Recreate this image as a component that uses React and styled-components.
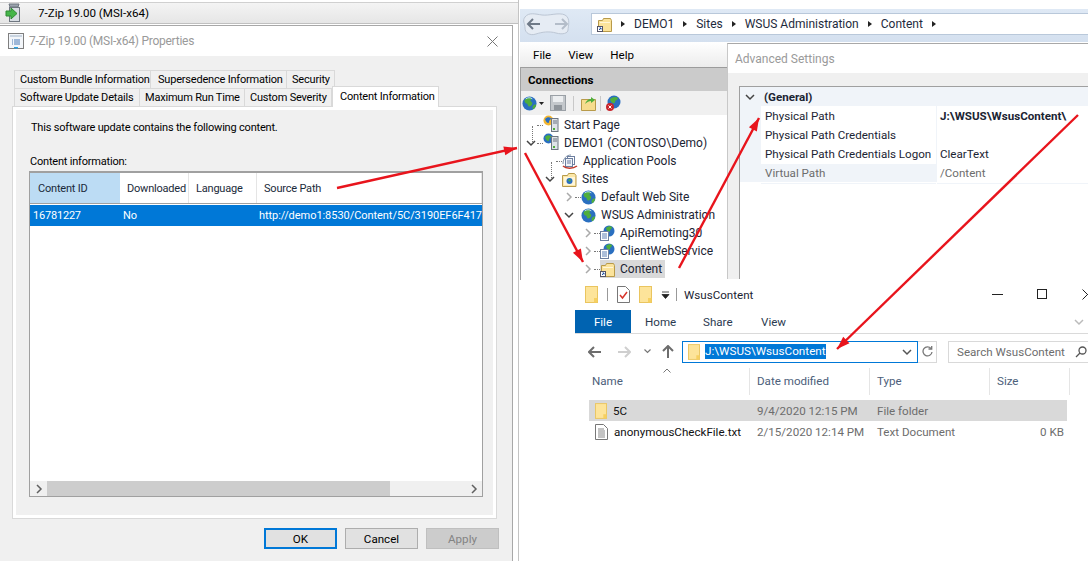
import React from 'react'
import styled, { createGlobalStyle } from 'styled-components'

const UI_FONT = `Roboto, "Noto Sans", sans-serif`

const Global = createGlobalStyle`
  html, body {
    margin: 0;
    padding: 0;
    background: #fff;
    overflow: hidden;
  }
  * { box-sizing: border-box; }
`

const Desktop = styled.div`
  position: relative;
  width: 1088px;
  height: 561px;
  overflow: hidden;
  background: #fff;
  font-family: ${UI_FONT};
  font-size: 11.6px;
  color: #000;
  white-space: nowrap;
`

/* left window */

const PropertiesWindow = styled.section`
  position: absolute;
  left: 0;
  top: 0;
  width: 519px;
  height: 561px;
  font-size: 11px;
  letter-spacing: -0.2px;
  border-right: 1px solid #c4c4c4;
`

const ListStrip = styled.div`
  display: flex;
  align-items: center;
  height: 22px;
  margin-top: 2px;
  padding-left: 5px;
  gap: 15px;
  font-size: 11.6px;
  letter-spacing: 0;
  background: linear-gradient(#f4f4f4, #e6e6e6);
  border-top: 1px solid #d0d0d0;
  border-bottom: 1px solid #c0c0c0;
`

const Dialog = styled.div`
  width: 513px;
  height: 536px;
  margin-top: 1px;
  background: #f0f0f0;
  border-top: 1px solid #a8a8a8;
  border-right: 1px solid #a8a8a8;
`

const DialogTitle = styled.header`
  display: flex;
  align-items: center;
  height: 30px;
  padding: 0 14px 0 8px;
  gap: 5px;
  background: #fff;
  color: #9a9a9a;
  font-size: 12px;
  letter-spacing: -0.25px;
  svg:last-child { margin-left: auto; }
`

const TabRow = styled.div`
  display: flex;
  height: 18px;
  margin-left: 14px;
  margin-top: ${p => p.$top || 0}px;
  position: relative;
`

const Tab = styled.div`
  width: ${p => p.$w}px;
  height: ${p => (p.$active ? 21 : 18)}px;
  margin-top: ${p => (p.$active ? -2 : 0)}px;
  padding-left: ${p => p.$pad || 5}px;
  line-height: ${p => (p.$active ? 19 : 18)}px;
  background: ${p => (p.$active ? '#fff' : '#f0f0f0')};
  border: 1px solid #d9d9d9;
  border-bottom: none;
  border-left-width: ${p => (p.$first || p.$active ? 1 : 0)}px;
  position: relative;
  z-index: ${p => (p.$active ? 2 : 0)};
`

const TabPanel = styled.div`
  width: 485px;
  height: 413px;
  margin-left: 12px;
  padding: 0 0 0 16px;
  background: #f0f0f0;
  border: 1px solid #d9d9d9;
  box-shadow: inset 0 0 0 3px #fff;
`

const Intro = styled.p`
  margin: 0;
  padding: 13px 0 0 2px;
  line-height: 15px;
`

const ListLabel = styled.p`
  margin: 0;
  padding: 19px 0 0 1px;
  line-height: 15px;
`

const ContentList = styled.div`
  display: flex;
  flex-direction: column;
  width: 454px;
  height: 326px;
  margin-top: 2px;
  background: #fff;
  border: 1px solid #a0a0a0;
  border-top-width: 2px;
`

const ListHead = styled.div`
  display: flex;
  height: 31px;
  border-bottom: 1px solid #a0a0a0;
  margin-bottom: 1px;
`

const HeadCell = styled.div`
  width: ${p => p.$w}px;
  padding-left: ${p => p.$pad}px;
  line-height: 32px;
  background: ${p => (p.$hot ? '#bcdcf4' : '#fff')};
  border-right: 1px solid ${p => (p.$hot ? '#bcdcf4' : '#e5e5e5')};
  color: #1a2a3a;
`

const ListRow = styled.div`
  display: flex;
  height: 21px;
  line-height: 22px;
  background: #0078d7;
  color: #fff;
`

const RowCell = styled.div`
  width: ${p => p.$w}px;
  padding-left: ${p => p.$pad}px;
  flex-shrink: 0;
`

const UrlCell = styled(RowCell)`
  overflow: hidden;
  letter-spacing: -0.05px;
`

const ListFill = styled.div`
  flex: 1;
`

const HScroll = styled.div`
  display: flex;
  align-items: center;
  height: 15px;
  background: #f0f0f0;
`

const ScrollBtn = styled.div`
  display: flex;
  align-items: center;
  justify-content: center;
  width: 17px;
  height: 15px;
  flex-shrink: 0;
`

const ScrollTrack = styled.div`
  flex: 1;
  height: 15px;
`

const ScrollThumb = styled.div`
  width: 343px;
  height: 15px;
  background: #cdcdcd;
`

const DialogButtons = styled.div`
  display: flex;
  justify-content: flex-end;
  gap: 8px;
  width: 499px;
  margin-top: 9px;
`

const DlgButton = styled.button`
  width: 73px;
  height: 21px;
  padding: 0;
  font: 11.6px ${UI_FONT};
  color: ${p => (p.disabled ? '#838383' : '#000')};
  background: ${p => (p.disabled ? '#cccccc' : '#e1e1e1')};
  border: ${p => (p.$primary ? '2px solid #0078d7' : `1px solid ${p.disabled ? '#bfbfbf' : '#adadad'}`)};
`

/* IIS manager */

const IisWindow = styled.section`
  position: absolute;
  left: 520px;
  top: 0;
  width: 568px;
  height: 280px;
  padding-top: 9px;
`

const AddressStrip = styled.div`
  display: flex;
  align-items: center;
  height: 33px;
  padding: 0 0 3px 2px;
  background: linear-gradient(#dfe9f5, #d4e0ef);
  gap: 19px;
`

const Breadcrumb = styled.div`
  display: flex;
  align-items: center;
  flex: 1;
  height: 22px;
  padding-left: 5px;
  gap: 9px;
  background: #fff;
  border: 1px solid #b9c8da;
  border-right: none;
  font-size: 12px;
  color: #1e2a3c;
`

const CrumbArrow = styled.span`
  width: 0;
  height: 0;
  border-left: 4px solid #222;
  border-top: 3.5px solid transparent;
  border-bottom: 3.5px solid transparent;
`

const MenuBar = styled.nav`
  display: flex;
  align-items: center;
  height: 25px;
  width: 207px;
  padding-left: 13px;
  gap: 17px;
  font-size: 11.6px;
  background: linear-gradient(#fff, #ececec);
`

const ConnectionsPane = styled.div`
  width: 207px;
  height: 213px;
  border-left: 1px solid #a0a0a0;
`

const PaneHeader = styled.div`
  height: 24px;
  line-height: 24px;
  padding-left: 7px;
  font-weight: 700;
  background: #cbcbcb;
  border-top: 1px solid #9c9c9c;
`

const PaneTools = styled.div`
  display: flex;
  align-items: center;
  height: 24px;
  padding-left: 1px;
  gap: 4px;
  background: #f0f0f0;
`

const ToolSep = styled.span`
  width: 1px;
  height: 15px;
  margin: 0 ${p => p.$right || 0}px 0 ${p => p.$left || 0}px;
  background: #c8c8c8;
`

const TreeList = styled.ul`
  list-style: none;
  margin: 0;
  padding: 1px 0 0;
`

const TreeRow = styled.li`
  position: relative;
  display: flex;
  align-items: center;
  height: 18px;
  padding-left: ${p => 4 + p.$depth * 19}px;

  &::before {
    content: ${p => (p.$line ? '""' : 'none')};
    position: absolute;
    left: ${p => 11 + p.$depth * 19}px;
    top: 10px;
    height: ${p => p.$line}px;
    border-left: 1px dotted #777;
  }
`

const Twisty = styled.span`
  display: flex;
  align-items: center;
  justify-content: center;
  width: 12px;
  flex-shrink: 0;
`

const Dots = styled.span`
  width: 6px;
  border-top: 1px dotted ${p => (p.$show ? '#777' : 'transparent')};
  flex-shrink: 0;
`

const TreeNode = styled.span`
  display: flex;
  align-items: center;
  height: 18px;
  gap: 5px;
  padding-right: 3px;
  font-size: 12px;
  color: #1b2433;
  background: ${p => (p.$selected ? '#d9d9d9' : 'transparent')};
`

const AdvancedWindow = styled.section`
  position: absolute;
  left: 727px;
  top: 43px;
  width: 361px;
  height: 236px;
  background: #f0f0f0;
  border-top: 1px solid #a8a8a8;
  border-left: 1px solid #c8c8c8;
`

const AdvancedTitle = styled.header`
  height: 29px;
  line-height: 31px;
  padding-left: 7px;
  background: #fff;
  color: #9a9a9a;
  font-size: 12px;
`

const PropGrid = styled.div`
  height: 193px;
  margin: 13px 0 0 11px;
  background: #fff;
  border: 1px solid #a0a0a0;
  border-right: none;
  border-bottom: none;
`

const PropCategory = styled.div`
  display: flex;
  align-items: center;
  height: 19px;
  padding-left: 5px;
  gap: 9px;
  background: #f0f4f9;
  font-weight: 700;
  color: #1b2433;
`

const PropRow = styled.div`
  display: grid;
  grid-template-columns: 196px 1fr;
  height: 19px;
  line-height: 20px;
  background: #f0f4f9;
  color: ${p => (p.$muted ? '#6d6d6d' : '#1b2433')};
`

const PropName = styled.div`
  margin-left: 21px;
  padding-left: 4px;
  background: ${p => (p.$muted ? 'transparent' : '#fff')};
  border-bottom: 1px solid #f0f4f9;
`

const PropValue = styled.div`
  padding-left: 3px;
  margin-left: 1px;
  font-weight: ${p => (p.$bold ? 700 : 400)};
  background: #fff;
  border-bottom: 1px solid #f0f4f9;
`

/* explorer */

const ExplorerWindow = styled.section`
  position: absolute;
  left: 575px;
  top: 279px;
  width: 513px;
  height: 282px;
  background: #fff;
`

const ExpTitleBar = styled.div`
  display: flex;
  align-items: center;
  height: 31px;
  padding-left: 10px;
  gap: 9px;
  color: #1b2433;
`

const VSep = styled.span`
  width: 1px;
  height: 13px;
  margin-left: ${p => p.$pull || 0}px;
  background: #999;
`

const WindowTitle = styled.span`
  margin-left: -2px;
`

const WindowControls = styled.div`
  display: flex;
  align-items: center;
  margin-left: auto;
  gap: 34px;
  margin-right: -5px;
`

const RibbonTabs = styled.div`
  display: flex;
  align-items: stretch;
  height: 24px;
  border-bottom: 1px solid #dadada;
  color: #2b3a50;
`

const FileTab = styled.div`
  width: 56px;
  line-height: 24px;
  text-align: center;
  background: #0063b1;
  color: #fff;
`

const RibbonTab = styled.div`
  line-height: 24px;
  width: ${p => p.$w}px;
  margin-left: ${p => p.$gap}px;
`

const RibbonToggle = styled.div`
  margin-left: auto;
  margin-right: 4px;
  display: flex;
  align-items: center;
`

const NavRow = styled.div`
  display: flex;
  align-items: center;
  height: 23px;
  margin-top: 6px;
  padding-left: 12px;
`

const NavBtn = styled.span`
  display: flex;
  align-items: center;
  justify-content: center;
  width: 14px;
  margin-left: ${p => p.$gap || 0}px;
`

const PathBox = styled.div`
  display: flex;
  align-items: center;
  width: 236px;
  height: 22px;
  margin-left: 7px;
  padding: 0 5px;
  border: 1px solid #0078d7;
  font-size: 11.7px;
  gap: 5px;
`

const PathSelected = styled.span`
  background: #0078d7;
  color: #fff;
  line-height: 15px;
`

const PathCaret = styled.span`
  display: flex;
  margin-left: auto;
`

const RefreshBox = styled.div`
  display: flex;
  align-items: center;
  justify-content: center;
  width: 19px;
  height: 22px;
  border: 1px solid #d9d9d9;
  border-left: none;
`

const SearchBox = styled.div`
  display: flex;
  align-items: center;
  justify-content: space-between;
  flex: 1;
  height: 22px;
  margin-left: 11px;
  padding: 0 1px 0 8px;
  border: 1px solid #d9d9d9;
  border-right: none;
  color: #6d6d6d;
`

const ColumnHead = styled.div`
  position: relative;
  display: flex;
  height: 27px;
  margin: 5px 0 0 14px;
`

const SortCaret = styled.span`
  position: absolute;
  left: 74px;
  top: 0;
  line-height: 0;
`

const ColCell = styled.div`
  width: ${p => p.$w}px;
  padding-left: ${p => p.$pad}px;
  line-height: 27px;
  color: #4c607a;
  border-right: 1px solid #e5e5e5;
`

const FileList = styled.div`
  margin: 5px 0 0 14px;
  width: 478px;
`

const FileRow = styled.div`
  display: grid;
  grid-template-columns: 161px 120px 120px 74px;
  align-items: center;
  height: 21px;
  background: ${p => (p.$selected ? '#d9d9d9' : 'transparent')};
`

const FileName = styled.div`
  display: flex;
  align-items: center;
  gap: 6px;
  padding-left: 6px;
  color: #111;
`

const FileMeta = styled.div`
  padding-left: 7px;
  color: #6d6d6d;
  text-align: ${p => (p.$right ? 'right' : 'left')};
`

const ArrowLayer = styled.svg`
  position: absolute;
  left: 0;
  top: 0;
  pointer-events: none;
`

const ToolGlobeWrap = styled.span`
  display: flex;
  align-items: center;
  gap: 2px;
  margin-right: 2px;
`

/* drawings */

const Folder = ({ w = 13, h = 17 }) => (
  <svg width={w} height={h} viewBox="0 0 13 17" style={{ flexShrink: 0 }}>
    <rect x=".5" y=".5" width="12" height="16" fill="#fde49a" stroke="#eac55f" />
    <rect x="9" y="12" width="3.5" height="4.5" fill="#f6d061" />
  </svg>
)

const Globe = ({ s = 15 }) => (
  <svg width={s} height={s} viewBox="0 0 16 16" style={{ flexShrink: 0 }}>
    <circle cx="8" cy="8" r="7.5" fill="#2a6fc0" />
    <path d="M3 4c2-2 5-3 7-2 1 1-1 2-1 3s2 1 2 3-3 4-4 3-1-3-2-3-3-2-2-4zM12 10c1-1 2-1 3-1 0 2-1 4-3 5-1-1-1-3 0-4z" fill="#4fae3c" />
    <path d="M4 3c2-1.500 5-1.500 7 0" stroke="#bfe0ff" fill="none" />
  </svg>
)

const ServerNode = ({ start }) => (
  <svg width="16" height="17" viewBox="0 0 16 17" style={{ flexShrink: 0, marginTop: -3 }}>
    <circle cx="5.500" cy="5.500" r="5" fill={start ? '#f2b632' : '#2a6fc0'} />
    <path d="M2 4c2-2 4-2 6-1 0 2-2 2-2 4s-3 1-4-3z" fill={start ? '#2a6fc0' : '#4fae3c'} />
    <rect x="8.500" y="3.500" width="6.500" height="13" fill="#dfe3e8" stroke="#6d7580" />
    <path d="M10 6h4M10 8h4" stroke="#6d7580" />
    <rect x="10" y="13" width="2" height="2" fill="#4fae3c" />
  </svg>
)

const PoolIcon = () => (
  <svg width="16" height="17" viewBox="0 0 16 17" style={{ flexShrink: 0 }}>
    <path d="M1 11c0-6 4-9 8-9" stroke="#7c8ea6" fill="none" />
    <rect x="5.500" y="3.500" width="7" height="8" fill="#fff" stroke="#6d7fa0" />
    <rect x="3.500" y="5.500" width="7" height="8" fill="#eef2f8" stroke="#6d7fa0" />
    <path d="M5 8h4M5 10h4" stroke="#6d7fa0" />
    <path d="M1 13c3 3 10 3 14 0" stroke="#c0392b" strokeWidth="1.500" fill="none" />
  </svg>
)

const SitesIcon = () => (
  <svg width="15" height="15" viewBox="0 0 15 15" style={{ flexShrink: 0 }}>
    <path d="M.5 14.500v-11h5l1-2h6l1.500 2v11z" fill="#fbe7a8" stroke="#b89a4a" />
    <rect x="2" y="5" width="11" height="8" fill="#fff6d8" />
    <circle cx="7.500" cy="9" r="3" fill="#2a6fc0" />
    <path d="M6 8c1-1 2-1 3 0-1 2-2 2-3 0z" fill="#4fae3c" />
  </svg>
)

const WebApp = () => (
  <svg width="15" height="16" viewBox="0 0 15 16" style={{ flexShrink: 0 }}>
    <circle cx="9" cy="6" r="5.500" fill="#2a6fc0" />
    <path d="M6 3c2-2 5-2 6-1 0 2-2 2-2 4s-3 1-4-3z" fill="#4fae3c" />
    <rect x=".5" y="6.500" width="8" height="9" fill="#fff" stroke="#6d7fa0" />
    <path d="M2 9h5M2 11h5M2 13h5" stroke="#5b7fb5" />
  </svg>
)

const ShortcutFolder = ({ s = 15 }) => (
  <svg width={s} height={s} viewBox="0 0 15 15" style={{ flexShrink: 0 }}>
    <path d="M1.500 14.500v-11h4l1-2h7l1 2v11z" fill="#fbe39b" stroke="#b89a4a" />
    <path d="M3 5h10v1H3z" fill="#fff6d8" />
    <rect x=".5" y="9.500" width="5" height="5" fill="#fff" stroke="#556" />
    <path d="M2 13l2-2M2.500 11H4v1.500" stroke="#1b4fa0" fill="none" />
  </svg>
)

const Chevron = ({ down, color = '#555' }) => (
  <svg width="10" height="10" viewBox="0 0 10 10" fill="none" stroke={color} strokeWidth="1.500">
    {down ? <path d="M1 3l4 4 4-4" /> : <path d="M3 1l4 4-4 4" />}
  </svg>
)

const NavPill = () => (
  <svg width="50" height="26" viewBox="0 0 50 26">
    <path d="M3 6c4-5 10-3 17-2s17-3 23 0 3 12 3 15-5 5-12 3-14-1-20 1-11-1-11-6-3-7 0-11z" fill="#e6ecf4" stroke="#bcc6d4" />
    <path d="M18 13H6m5-5l-5 5 5 5" stroke="#6f7a88" strokeWidth="2" fill="none" />
    <path d="M33 13h12m-5-5l5 5-5 5" stroke="#b4bdc9" strokeWidth="2" fill="none" />
  </svg>
)

const DialogIcon = () => (
  <svg width="16" height="16" viewBox="0 0 16 16">
    <rect x=".5" y=".5" width="15" height="15" fill="#f3f6fa" stroke="#7f7f7f" />
    <rect x="2" y="2" width="12" height="2" fill="#c9d4e0" />
    <path d="M4 7h1M6 7h6M4 9h1M6 9h6M4 11h1M6 11h6" stroke="#4a78b5" />
    <rect x="6" y="14" width="4" height="1.500" fill="#2a9fe0" />
  </svg>
)

const PackageIcon = () => (
  <svg width="18" height="20" viewBox="0 0 18 20">
    <path d="M4 1h10l-1 3H5z" fill="#9aa3ad" stroke="#6f7780" />
    <rect x="4.500" y="4.500" width="10" height="14" fill="#d8dde3" stroke="#6f7780" />
    <path d="M1 8h5V5l6 5.500L6 16v-3H1z" fill="#46b64a" stroke="#2f8a33" />
  </svg>
)

const Cross = ({ s = 11, color = '#777' }) => (
  <svg width={s} height={s} viewBox="0 0 11 11" stroke={color} fill="none">
    <path d="M.5.500l10 10M10.500.500l-10 10" />
  </svg>
)

const ToolGlobe = () => (
  <ToolGlobeWrap>
    <Globe s={15} />
    <svg width="5" height="3" viewBox="0 0 5 3"><path d="M0 0h5L2.500 3z" fill="#222" /></svg>
  </ToolGlobeWrap>
)

const SaveIcon = () => (
  <svg width="16" height="16" viewBox="0 0 16 16">
    <rect x=".5" y=".5" width="15" height="15" fill="#c4c8cc" stroke="#9aa0a6" />
    <rect x="3" y="1" width="10" height="6" fill="#eceef0" />
    <rect x="4" y="10" width="8" height="5" fill="#8f959b" />
  </svg>
)

const UpFolder = () => (
  <svg width="15" height="16" viewBox="0 0 15 16">
    <path d="M.5 15.500v-11h14v11z" fill="#f6dc8e" stroke="#b89a4a" />
    <path d="M4 9c1-3 3-5 6-5V2l4 3-4 3V6c-2 0-4 1-6 3z" fill="#4fae3c" />
  </svg>
)

const DisconnectIcon = () => (
  <svg width="17" height="17" viewBox="0 0 17 17">
    <circle cx="9" cy="7" r="6.500" fill="#2a6fc0" />
    <path d="M5 4c2-2 6-3 8-1 0 2-3 2-3 4s-4 2-5-3z" fill="#4fae3c" />
    <circle cx="5" cy="12" r="4" fill="#c9252c" />
    <path d="M3.500 10.500l3 3m0-3l-3 3" stroke="#fff" />
  </svg>
)

const TextFile = () => (
  <svg width="13" height="16" viewBox="0 0 13 16" style={{ flexShrink: 0 }}>
    <path d="M.5.500h8l4 4v11H.5z" fill="#fff" stroke="#777" />
    <path d="M3 5h6M3 7h7M3 9h7M3 11h7M3 13h7" stroke="#888" />
  </svg>
)

const Checklist = () => (
  <svg width="13" height="17" viewBox="0 0 13 17">
    <path d="M.5.500h8l4 4v12H.5z" fill="#fff" stroke="#777" />
    <path d="M3 9l2.500 3L10 6" stroke="#d7352b" strokeWidth="1.500" fill="none" />
  </svg>
)

const HistoryArrow = ({ left, color }) => (
  <svg width="13" height="12" viewBox="0 0 13 12" stroke={color} strokeWidth="2" fill="none">
    {left ? <path d="M13 6H2m4-5L1 6l5 5" /> : <path d="M0 6h11M7 1l5 5-5 5" />}
  </svg>
)

const UpArrow = () => (
  <svg width="12" height="13" viewBox="0 0 12 13" stroke="#6d6d6d" strokeWidth="2" fill="none">
    <path d="M6 13V2M1 6l5-5 5 5" />
  </svg>
)

const RefreshIcon = () => (
  <svg width="11" height="12" viewBox="0 0 11 12" stroke="#777" strokeWidth="1.300" fill="none">
    <path d="M9 2.500A4.500 4.500 0 1 0 10 6" />
    <path d="M6.500 3h3.200V0" />
  </svg>
)

const SearchIcon = () => (
  <svg width="12" height="12" viewBox="0 0 12 12" stroke="#555" strokeWidth="1.300" fill="none">
    <circle cx="7.500" cy="4.500" r="3.500" />
    <path d="M5 7l-4 4" />
  </svg>
)

const arrows = [
  { x1: 337, y1: 188, x2: 517, y2: 148 },
  { x1: 525, y1: 153, x2: 583, y2: 262 },
  { x1: 679, y1: 268, x2: 759, y2: 118 },
  { x1: 1078, y1: 115, x2: 837, y2: 349 },
]

const arrowPoints = ({ x1, y1, x2, y2 }) => {
  const len = Math.hypot(x2 - x1, y2 - y1)
  const ux = (x2 - x1) / len
  const uy = (y2 - y1) / len
  const bx = x2 - ux * 13
  const by = y2 - uy * 13
  return `${x2},${y2} ${bx - uy * 4.5},${by + ux * 4.5} ${bx + uy * 4.5},${by - ux * 4.5}`
}

const treeItems = [
  { depth: 0, label: 'Start Page', icon: <ServerNode start />, dots: true, line: 18 },
  { depth: 0, label: 'DEMO1 (CONTOSO\\Demo)', icon: <ServerNode />, open: true, dots: true },
  { depth: 1, label: 'Application Pools', icon: <PoolIcon />, dots: true, line: 18 },
  { depth: 1, label: 'Sites', icon: <SitesIcon />, open: true },
  { depth: 2, label: 'Default Web Site', icon: <Globe />, closed: true, dots: true },
  { depth: 2, label: 'WSUS Administration', icon: <Globe />, open: true },
  { depth: 3, label: 'ApiRemoting30', icon: <WebApp />, closed: true, dots: true },
  { depth: 3, label: 'ClientWebService', icon: <WebApp />, closed: true, dots: true },
  { depth: 3, label: 'Content', icon: <ShortcutFolder />, closed: true, dots: true, selected: true },
]

const App = () => (
  <Desktop>
    <Global />

    <PropertiesWindow>
      <ListStrip>
        <PackageIcon />
        <span>7-Zip 19.00 (MSI-x64)</span>
      </ListStrip>
      <Dialog>
        <DialogTitle>
          <DialogIcon />
          <span>7-Zip 19.00 (MSI-x64) Properties</span>
          <Cross />
        </DialogTitle>
        <TabRow $top={14}>
          <Tab $w={137} $first>Custom Bundle Information</Tab>
          <Tab $w={136} $pad={7}>Supersedence Information</Tab>
          <Tab $w={48}>Security</Tab>
        </TabRow>
        <TabRow>
          <Tab $w={126} $first>Software Update Details</Tab>
          <Tab $w={105}>Maximum Run Time</Tab>
          <Tab $w={87}>Custom Severity</Tab>
          <Tab $w={107} $pad={7} $active>Content Information</Tab>
        </TabRow>
        <TabPanel>
          <Intro>This software update contains the following content.</Intro>
          <ListLabel>Content information:</ListLabel>
          <ContentList>
            <ListHead>
              <HeadCell $w={90} $pad={8} $hot>Content ID</HeadCell>
              <HeadCell $w={69} $pad={7}>Downloaded</HeadCell>
              <HeadCell $w={68} $pad={7}>Language</HeadCell>
              <HeadCell $w={225} $pad={7}>Source Path</HeadCell>
            </ListHead>
            <ListRow>
              <RowCell $w={90} $pad={3}>16781227</RowCell>
              <RowCell $w={137} $pad={3}>No</RowCell>
              <UrlCell $w={225} $pad={2}>http://demo1:8530/Content/5C/3190EF6F417</UrlCell>
            </ListRow>
            <ListFill />
            <HScroll>
              <ScrollBtn><Chevron color="#606060" /></ScrollBtn>
              <ScrollTrack><ScrollThumb /></ScrollTrack>
              <ScrollBtn><Chevron color="#606060" /></ScrollBtn>
            </HScroll>
          </ContentList>
        </TabPanel>
        <DialogButtons>
          <DlgButton $primary>OK</DlgButton>
          <DlgButton>Cancel</DlgButton>
          <DlgButton disabled>Apply</DlgButton>
        </DialogButtons>
      </Dialog>
    </PropertiesWindow>

    <IisWindow>
      <AddressStrip>
        <NavPill />
        <Breadcrumb>
          <ShortcutFolder s={15} />
          <CrumbArrow />
          <span>DEMO1</span>
          <CrumbArrow />
          <span>Sites</span>
          <CrumbArrow />
          <span>WSUS Administration</span>
          <CrumbArrow />
          <span>Content</span>
          <CrumbArrow />
        </Breadcrumb>
      </AddressStrip>
      <MenuBar>
        <span>File</span>
        <span>View</span>
        <span>Help</span>
      </MenuBar>
      <ConnectionsPane>
        <PaneHeader>Connections</PaneHeader>
        <PaneTools>
          <ToolGlobe />
          <SaveIcon />
          <ToolSep $left={3} $right={3} />
          <UpFolder />
          <ToolSep />
          <DisconnectIcon />
        </PaneTools>
        <TreeList>
          {treeItems.map(item => (
            <TreeRow key={item.label} $depth={item.depth} $line={item.line}>
              <Twisty>
                {item.open && <Chevron down color="#444" />}
                {item.closed && <Chevron color="#aaa" />}
              </Twisty>
              <Dots $show={item.dots} />
              <TreeNode $selected={item.selected}>
                {item.icon}
                <span>{item.label}</span>
              </TreeNode>
            </TreeRow>
          ))}
        </TreeList>
      </ConnectionsPane>
    </IisWindow>

    <AdvancedWindow>
      <AdvancedTitle>Advanced Settings</AdvancedTitle>
      <PropGrid>
        <PropCategory>
          <Chevron down color="#444" />
          <span>(General)</span>
        </PropCategory>
        <PropRow>
          <PropName>Physical Path</PropName>
          <PropValue $bold>J:\WSUS\WsusContent\</PropValue>
        </PropRow>
        <PropRow>
          <PropName>Physical Path Credentials</PropName>
          <PropValue />
        </PropRow>
        <PropRow>
          <PropName>Physical Path Credentials Logon</PropName>
          <PropValue>ClearText</PropValue>
        </PropRow>
        <PropRow $muted>
          <PropName $muted>Virtual Path</PropName>
          <PropValue>/Content</PropValue>
        </PropRow>
      </PropGrid>
    </AdvancedWindow>

    <ExplorerWindow>
      <ExpTitleBar>
        <Folder />
        <VSep />
        <Checklist />
        <Folder />
        <svg width="9" height="8" viewBox="0 0 9 8"><path d="M1 1h7M1 3.500h7L4.500 7.500z" stroke="#222" fill="#222" strokeWidth=".8" /></svg>
        <VSep $pull={-3} />
        <WindowTitle>WsusContent</WindowTitle>
        <WindowControls>
          <svg width="11" height="2"><rect width="11" height="1" fill="#222" /></svg>
          <svg width="11" height="11"><rect x=".5" y=".5" width="9" height="9" fill="none" stroke="#222" /></svg>
          <Cross color="#222" />
        </WindowControls>
      </ExpTitleBar>
      <RibbonTabs>
        <FileTab>File</FileTab>
        <RibbonTab $gap={14} $w={58}>Home</RibbonTab>
        <RibbonTab $gap={0} $w={58}>Share</RibbonTab>
        <RibbonTab $gap={0} $w={40}>View</RibbonTab>
        <RibbonToggle><Chevron down color="#bbb" /></RibbonToggle>
      </RibbonTabs>
      <NavRow>
        <NavBtn><HistoryArrow left color="#6d6d6d" /></NavBtn>
        <NavBtn $gap={16}><HistoryArrow color="#cfcfcf" /></NavBtn>
        <NavBtn $gap={9}>
          <svg width="7" height="5" viewBox="0 0 7 5" stroke="#777" strokeWidth="1.200" fill="none"><path d="M.5.500l3 3 3-3" /></svg>
        </NavBtn>
        <NavBtn $gap={7}><UpArrow /></NavBtn>
        <PathBox>
          <Folder w={12} h={16} />
          <PathSelected>J:\WSUS\WsusContent</PathSelected>
          <PathCaret><Chevron down color="#555" /></PathCaret>
        </PathBox>
        <RefreshBox><RefreshIcon /></RefreshBox>
        <SearchBox>
          <span>Search WsusContent</span>
          <SearchIcon />
        </SearchBox>
      </NavRow>
      <ColumnHead>
        <SortCaret>
          <svg width="8" height="5" viewBox="0 0 8 5" stroke="#777" fill="none"><path d="M.5 4.500l3.500-3.500 3.500 3.500" /></svg>
        </SortCaret>
        <ColCell $w={161} $pad={3}>Name</ColCell>
        <ColCell $w={120} $pad={7}>Date modified</ColCell>
        <ColCell $w={120} $pad={7}>Type</ColCell>
        <ColCell $w={80} $pad={7}>Size</ColCell>
      </ColumnHead>
      <FileList>
        <FileRow $selected>
          <FileName><Folder w={12} h={16} /><span>5C</span></FileName>
          <FileMeta>9/4/2020 12:15 PM</FileMeta>
          <FileMeta>File folder</FileMeta>
          <FileMeta />
        </FileRow>
        <FileRow>
          <FileName><TextFile /><span>anonymousCheckFile.txt</span></FileName>
          <FileMeta>2/15/2020 12:14 PM</FileMeta>
          <FileMeta>Text Document</FileMeta>
          <FileMeta $right>0 KB</FileMeta>
        </FileRow>
      </FileList>
    </ExplorerWindow>

    <ArrowLayer width="1088" height="561" viewBox="0 0 1088 561">
      {arrows.map(a => (
        <g key={a.x1}>
          <line x1={a.x1} y1={a.y1} x2={a.x2} y2={a.y2} stroke="#e8141c" strokeWidth="2.4" />
          <polygon points={arrowPoints(a)} fill="#e8141c" />
        </g>
      ))}
    </ArrowLayer>
  </Desktop>
)

export default App
